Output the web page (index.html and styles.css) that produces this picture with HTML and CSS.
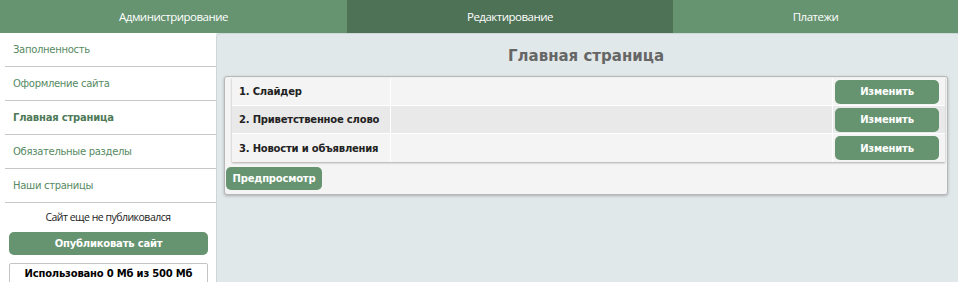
FILE: index.html
```html
<!DOCTYPE html>
<html lang="ru">
<head>
<meta charset="utf-8">
<title>Главная страница</title>
<link rel="stylesheet" href="styles.css">
</head>
<body>
<nav class="topnav">
  <a class="tab tab-1">Администрирование</a>
  <a class="tab tab-2 active">Редактирование</a>
  <a class="tab tab-3">Платежи</a>
</nav>
<div class="layout">
  <aside class="sidebar">
    <ul class="menu">
      <li class="menu-item">Заполненность</li>
      <li class="menu-item">Оформление сайта</li>
      <li class="menu-item current">Главная страница</li>
      <li class="menu-item">Обязательные разделы</li>
      <li class="menu-item">Наши страницы</li>
    </ul>
    <div class="status">Сайт еще не публиковался</div>
    <button class="btn publish">Опубликовать сайт</button>
    <div class="usage">Использовано 0 Мб из 500 Мб</div>
  </aside>
  <main class="main">
    <h1 class="title">Главная страница</h1>
    <section class="panel">
      <div class="table">
        <div class="row">
          <div class="cell name">1. Слайдер</div>
          <div class="cell spacer"></div>
          <div class="cell action"><button class="btn edit">Изменить</button></div>
        </div>
        <div class="row alt">
          <div class="cell name">2. Приветственное слово</div>
          <div class="cell spacer"></div>
          <div class="cell action"><button class="btn edit">Изменить</button></div>
        </div>
        <div class="row">
          <div class="cell name">3. Новости и объявления</div>
          <div class="cell spacer"></div>
          <div class="cell action"><button class="btn edit">Изменить</button></div>
        </div>
      </div>
      <button class="btn preview">Предпросмотр</button>
    </section>
  </main>
</div>
</body>
</html>
```
FILE: styles.css
```css
* { box-sizing: border-box; }
html, body { margin: 0; padding: 0; }
body {
  width: 958px;
  height: 282px;
  overflow: hidden;
  background: #e1e8ea;
  font-family: "DejaVu Sans", Verdana, sans-serif;
  font-size: 10px;
}
.topnav {
  display: flex;
  height: 33px;
  background: #669470;
}
.tab {
  display: flex;
  align-items: center;
  justify-content: center;
  color: #fff;
  font-family: "Open Sans", sans-serif;
  font-size: 11.5px;
  letter-spacing: -0.5px;
  padding-bottom: 1px;
}
.tab-1 { width: 347px; }
.tab-2 { width: 326px; }
.tab-3 { flex: 1; }
.tab.active { background: #4e7256; }

.layout {
  display: flex;
  height: 249px;
}
.sidebar {
  width: 216px;
  flex-shrink: 0;
  background: #fff;
  display: flex;
  flex-direction: column;
  padding-left: 5px;
}
.sidebar > * { flex-shrink: 0; }
.menu {
  list-style: none;
  margin: 0;
  padding: 0;
}
.menu-item {
  height: 34px;
  line-height: 34px;
  padding-left: 8px;
  color: #568a62;
  letter-spacing: -0.3px;
  border-bottom: 1px solid #c7c7c7;
}
.menu-item.current {
  font-weight: bold;
  color: #4e7a58;
  letter-spacing: -0.2px;
}
.status {
  text-align: center;
  font-family: "Open Sans", sans-serif;
  font-size: 10.5px;
  letter-spacing: -0.5px;
  color: #222;
  padding-top: 7px;
  height: 29px;
  padding-right: 5px;
}
.btn {
  border: none;
  background: #669470;
  color: #fff;
  font-family: "DejaVu Sans", Verdana, sans-serif;
  font-weight: bold;
  font-size: 10px;
  letter-spacing: -0.2px;
  border-radius: 5px;
  cursor: pointer;
  padding: 0;
}
.publish {
  margin-left: 4px;
  width: 199px;
  height: 23px;
}
.usage {
  margin-left: 4px;
  margin-top: 8px;
  width: 199px;
  height: 30px;
  border: 1px solid #c4c4c4;
  border-radius: 2px;
  text-align: center;
  font-weight: bold;
  letter-spacing: -0.2px;
  color: #000;
  padding-top: 4px;
}
.main {
  flex: 1;
  border-left: 1px solid #cfd6d8;
  border-top: 1px solid #cfd6d8;
  border-top-left-radius: 5px;
  padding: 0 10px 0 7px;
}
.title {
  margin: 13px 0 0;
  height: 29px;
  text-align: center;
  font-size: 15px;
  font-weight: bold;
  color: #666;
  letter-spacing: 0;
}
.panel {
  width: 724px;
  height: 119px;
  background: #f4f4f4;
  border: 1px solid #b8b8b8;
  border-radius: 3px;
  box-shadow: 0 1px 3px rgba(0,0,0,0.25);
  padding: 1px 2px 0 1px;
}
.table {
  margin-left: 6px;
  box-shadow: 0 1px 2px rgba(0,0,0,0.3);
}
.row {
  display: flex;
  height: 28px;
  background: #f4f4f4;
  border-bottom: 1px solid #fff;
}
.row:last-child { border-bottom: none; height: 28px; }
.row.alt { background: #e9e9e9; }
.cell {
  display: flex;
  align-items: center;
}
.name {
  width: 159px;
  padding-left: 7px;
  font-weight: bold;
  letter-spacing: -0.2px;
  white-space: nowrap;
  color: #222;
  border-right: 1px solid #fff;
}
.spacer {
  width: 442px;
  border-right: 1px solid #fff;
}
.action {
  flex: 1;
  padding-left: 2px;
}
.edit {
  width: 104px;
  height: 24px;
}
.preview {
  margin-top: 5px;
  width: 96px;
  height: 23px;
}
```
